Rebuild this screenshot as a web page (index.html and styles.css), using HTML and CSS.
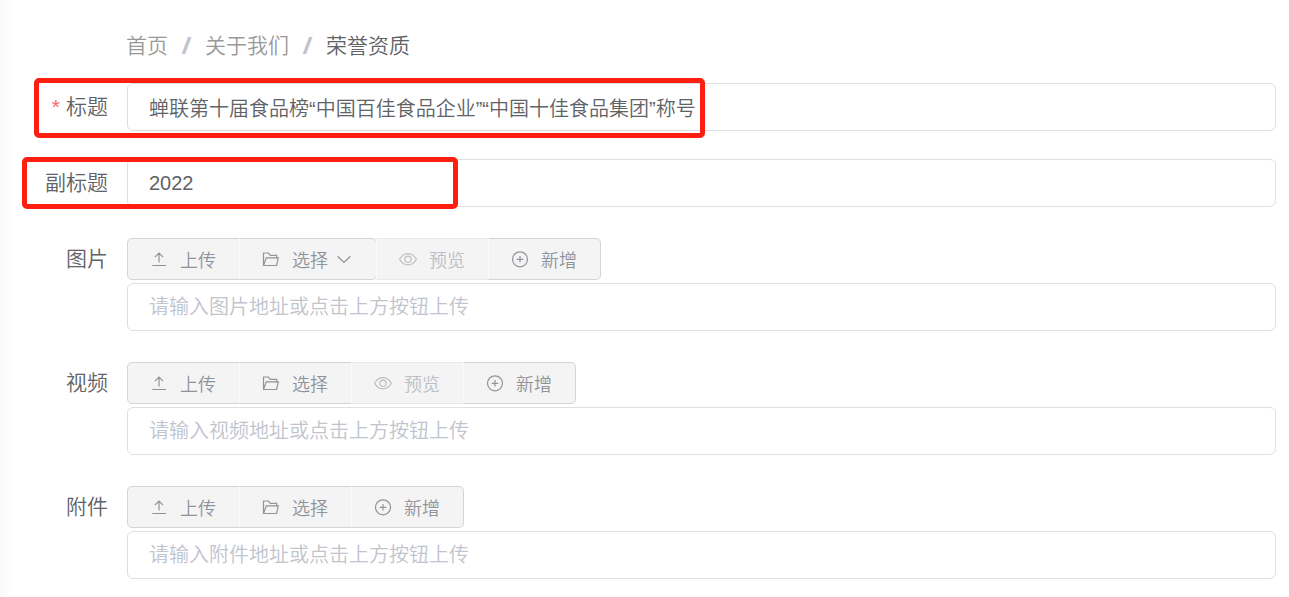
FILE: index.html
```html
<!DOCTYPE html>
<html lang="zh-CN">
<head>
    <meta charset="UTF-8">
    <meta name="viewport" content="width=device-width, initial-scale=1.0">
    <title>荣誉资质</title>
    <link rel="stylesheet" href="styles.css">
</head>
<body>
    <!-- shared icons -->
    <svg class="icon-defs" aria-hidden="true">
        <symbol id="icon-upload" viewBox="0 0 18 18">
            <path d="M2.3 15.5H16M9 12.4V3M4.9 7.1L9 3l4.1 4.1"/>
        </symbol>
        <symbol id="icon-folder" viewBox="0 0 18 18">
            <path d="M1.5 15.5V3h4.8l2 2.3h6.4v2.6M1.5 15.5l2.8-7.6h12l-1.7 7.6z"/>
        </symbol>
        <symbol id="icon-view" viewBox="0 0 18 18">
            <path d="M.6 9.3C4.8 1.8 13.2 1.8 17.4 9.3 13.2 16.8 4.8 16.8.6 9.3z"/>
            <circle cx="9" cy="9.3" r="3.2"/>
        </symbol>
        <symbol id="icon-plus" viewBox="0 0 18 18">
            <circle cx="9" cy="9.3" r="7.5"/>
            <path d="M5.7 9.3h6.6M9 6v6.6"/>
        </symbol>
        <symbol id="icon-down" viewBox="0 0 18 18">
            <path d="M2.6 6.2L9 12.4l6.4-6.2"/>
        </symbol>
    </svg>

    <div class="page">
        <nav class="breadcrumb">
            <a href="#">首页</a>
            <span class="separator">/</span>
            <a href="#">关于我们</a>
            <span class="separator">/</span>
            <span class="current">荣誉资质</span>
        </nav>

        <form class="form">
            <div class="form-item">
                <label class="form-label required" for="title">标题</label>
                <div class="form-content">
                    <input class="form-input" type="text" id="title" name="title" value="蝉联第十届食品榜“中国百佳食品企业”“中国十佳食品集团”称号">
                </div>
                <div class="mark mark-title"></div>
            </div>

            <div class="form-item">
                <label class="form-label" for="subtitle">副标题</label>
                <div class="form-content">
                    <input class="form-input" type="text" id="subtitle" name="subtitle" value="2022">
                </div>
                <div class="mark mark-subtitle"></div>
            </div>

            <div class="form-item">
                <label class="form-label" for="image">图片</label>
                <div class="form-content">
                    <div class="toolbar">
                        <button type="button" class="btn"><svg class="icon"><use href="#icon-upload"/></svg><span class="btn-text">上传</span></button>
                        <button type="button" class="btn btn-dropdown" aria-haspopup="true"><svg class="icon"><use href="#icon-folder"/></svg><span class="btn-text">选择</span><svg class="icon icon-arrow"><use href="#icon-down"/></svg></button>
                        <button type="button" class="btn" disabled><svg class="icon"><use href="#icon-view"/></svg><span class="btn-text">预览</span></button>
                        <button type="button" class="btn"><svg class="icon"><use href="#icon-plus"/></svg><span class="btn-text">新增</span></button>
                    </div>
                    <input class="form-input" type="text" id="image" name="image" placeholder="请输入图片地址或点击上方按钮上传">
                </div>
            </div>

            <div class="form-item">
                <label class="form-label" for="video">视频</label>
                <div class="form-content">
                    <div class="toolbar">
                        <button type="button" class="btn"><svg class="icon"><use href="#icon-upload"/></svg><span class="btn-text">上传</span></button>
                        <button type="button" class="btn"><svg class="icon"><use href="#icon-folder"/></svg><span class="btn-text">选择</span></button>
                        <button type="button" class="btn" disabled><svg class="icon"><use href="#icon-view"/></svg><span class="btn-text">预览</span></button>
                        <button type="button" class="btn"><svg class="icon"><use href="#icon-plus"/></svg><span class="btn-text">新增</span></button>
                    </div>
                    <input class="form-input" type="text" id="video" name="video" placeholder="请输入视频地址或点击上方按钮上传">
                </div>
            </div>

            <div class="form-item">
                <label class="form-label" for="file">附件</label>
                <div class="form-content">
                    <div class="toolbar">
                        <button type="button" class="btn"><svg class="icon"><use href="#icon-upload"/></svg><span class="btn-text">上传</span></button>
                        <button type="button" class="btn"><svg class="icon"><use href="#icon-folder"/></svg><span class="btn-text">选择</span></button>
                        <button type="button" class="btn"><svg class="icon"><use href="#icon-plus"/></svg><span class="btn-text">新增</span></button>
                    </div>
                    <input class="form-input" type="text" id="file" name="file" placeholder="请输入附件地址或点击上方按钮上传">
                </div>
            </div>
        </form>
    </div>
</body>
</html>
```
FILE: styles.css
```css
* {
    box-sizing: border-box;
}
body {
    margin: 0;
    background: #fff;
    color: #606266;
    font-family: "Liberation Sans", "Noto Sans CJK SC", sans-serif;
    font-weight: 350;
}
.icon-defs {
    display: none;
}
.page {
    min-height: 100vh;
    padding: 26px 13px 18px 0;
    background: linear-gradient(to right, #fafafa, #fff 13px);
}
.breadcrumb {
    display: flex;
    align-items: center;
    height: 36px;
    margin-bottom: 21px;
    padding-left: 126px;
    font-size: 21px;
}
.breadcrumb a {
    color: #999;
    text-decoration: none;
}
.breadcrumb .separator {
    width: 37px;
    text-align: center;
    font-family: "Noto Sans", sans-serif;
    font-size: 24px;
    font-weight: 700;
    color: #c0c4cc;
}
.form-item {
    position: relative;
    display: flex;
    margin-bottom: 28px;
}
.form-item:last-child {
    margin-bottom: 0;
}
.form-label {
    flex: none;
    width: 127px;
    padding-right: 19px;
    text-align: right;
    font-size: 21px;
    line-height: 48px;
}
.form-label.required::before {
    content: "*";
    margin-right: 6px;
    color: #f56c6c;
}
.form-content {
    flex: 1;
    min-width: 0;
}
.form-input {
    display: block;
    width: 100%;
    height: 48px;
    padding: 0 21px;
    border: 1px solid #dcdfe6;
    border-radius: 6px;
    background: #fff;
    color: #606266;
    font-family: inherit;
    font-size: 20px;
    font-weight: inherit;
    outline: none;
}
.form-input::placeholder {
    color: #c0c4cc;
}
.toolbar {
    display: flex;
    align-items: center;
    height: 48px;
}
.btn {
    display: flex;
    align-items: center;
    height: 42px;
    margin: 0;
    padding: 0 23px 0 22px;
    border: 1px solid #d3d4d6;
    background: #f4f4f4;
    color: #909399;
    font-family: inherit;
    font-size: 18px;
    font-weight: inherit;
    cursor: pointer;
}
.btn + .btn {
    margin-left: -1px;
    border-left-color: #fafafa;
}
.btn:first-child {
    border-radius: 5px 0 0 5px;
}
.btn:last-child {
    border-radius: 0 5px 5px 0;
}
.btn-dropdown {
    border-radius: 0 5px 5px 0;
}
.btn:disabled {
    border-color: #e9e9eb;
    border-left-color: #fafafa;
    color: #bcbec2;
    cursor: not-allowed;
}
.btn-text {
    margin-left: 12px;
}
.icon {
    width: 18px;
    height: 18px;
    fill: none;
    stroke: currentColor;
    stroke-width: 1.2;
}
.icon-arrow {
    margin-left: 7px;
}
/* red frames around the fields to fill in */
.mark {
    position: absolute;
    border: 5px solid #ff1e10;
    border-radius: 5px;
    pointer-events: none;
}
.mark-title {
    top: -5px;
    left: 34px;
    width: 671px;
    height: 60px;
}
.mark-subtitle {
    top: -2px;
    left: 22px;
    width: 436px;
    height: 52px;
}
```
